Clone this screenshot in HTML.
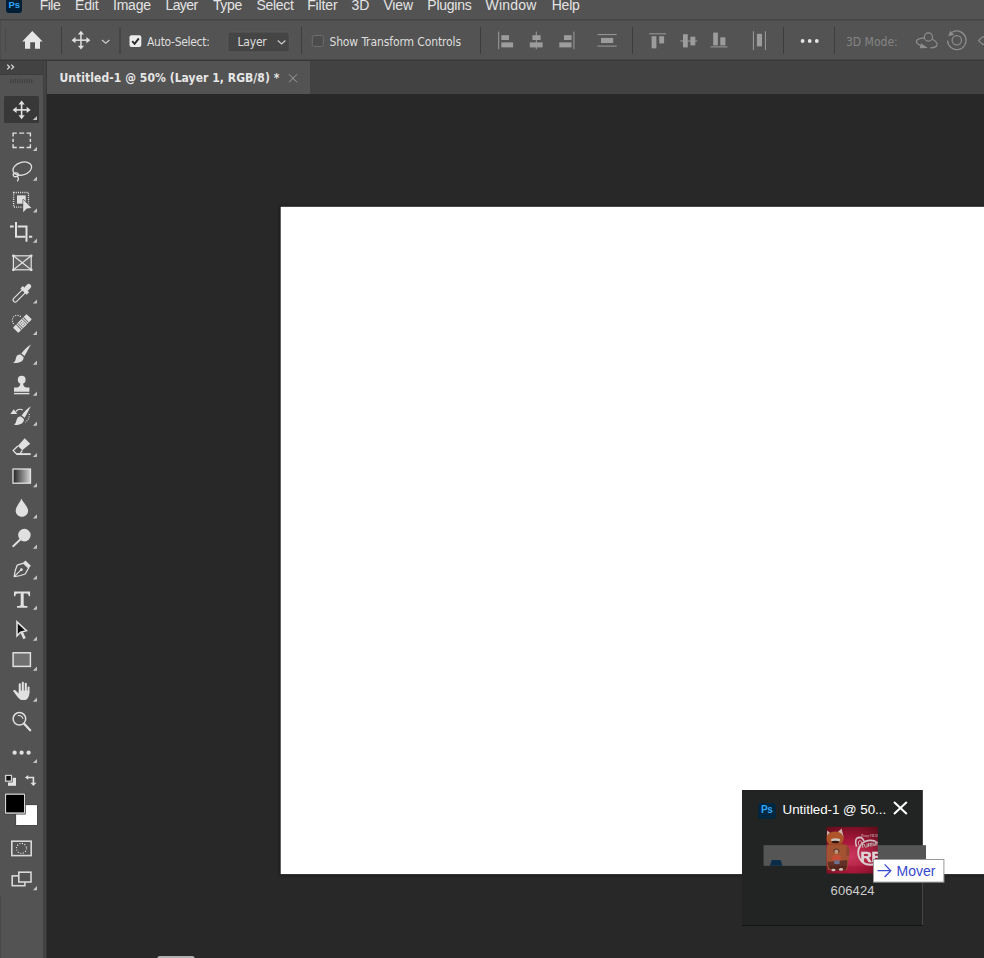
<!DOCTYPE html>
<html><head><meta charset="utf-8"><title>Photoshop</title>
<style>
html,body{margin:0;padding:0;background:#282828;overflow:hidden}
#app{position:relative;width:984px;height:958px;overflow:hidden;background:#282828;font-family:"DejaVu Sans Condensed","Liberation Sans",sans-serif;font-size:12px;color:#dcdcdc}
.abs{position:absolute}
.t{position:absolute;white-space:nowrap;line-height:1}
#menubar{left:0;top:0;width:984px;height:19px;background:#535353}
#optbar{left:0;top:21px;width:984px;height:38px;background:#535353}
.hline{background:#383838}
.menu{font-family:"Liberation Sans",sans-serif;font-size:14px;color:#e4e4e4;top:-2px}
.sep{position:absolute;top:27px;width:1px;height:27px;background:#3d3d3d}
.opt{top:36px;font-size:12px;color:#dedede}
#tabbar{left:47px;top:61px;width:937px;height:33px;background:#424242}
#tab{left:47px;top:61px;width:263px;height:33px;background:#535353}
#tools{left:0;top:61px;width:43px;height:897px;background:#535353}
#toolhead{left:0;top:61px;width:43px;height:13px;background:#424242;border-bottom:1px solid #3c3c3c}
#gutter{left:43px;top:61px;width:4px;height:897px;background:#424242}
#canvas{left:281px;top:207px;width:703px;height:667px;background:#fff;box-shadow:0 0 3px 1px rgba(0,0,0,.45)}
svg{position:absolute;left:0;top:0;overflow:visible}
</style></head><body>
<div id="app">
<!-- workspace + canvas -->
<svg width="984" height="958" viewBox="0 0 984 958"><defs><filter id="cs" x="-5%" y="-5%" width="110%" height="110%"><feGaussianBlur stdDeviation="1.6"/></filter></defs><rect x="279.5" y="205.8" width="710" height="669.6" fill="#000" opacity="0.35" filter="url(#cs)"/><rect x="280.7" y="206.8" width="710" height="667.3" fill="#fff"/></svg>

<!-- menubar -->
<div id="menubar" class="abs"></div>
<div class="abs" style="left:0;top:19px;width:984px;height:1px;background:#444"></div><div class="abs" style="left:0;top:20px;width:984px;height:1px;background:#4b4b4b"></div>
<div id="optbar" class="abs"></div>
<div class="abs" style="left:0;top:59px;width:984px;height:1px;background:#474747"></div><div class="abs" style="left:0;top:60px;width:984px;height:1px;background:#383838"></div>

<!-- tabs -->
<div id="tabbar" class="abs"></div>
<div id="tab" class="abs"></div>

<!-- tools -->
<div id="tools" class="abs"></div>
<div id="gutter" class="abs"></div><div class="abs" style="left:46px;top:94px;width:1px;height:864px;background:#343434"></div><div class="abs" style="left:43px;top:61px;width:1px;height:33px;background:#3e3e3e"></div><div class="abs" style="left:44px;top:61px;width:1px;height:33px;background:#474747"></div><div class="abs" style="left:46px;top:61px;width:1px;height:33px;background:#393939"></div>
<div id="toolhead" class="abs"></div>

<!--MENU-->
<div class="abs" style="left:5.8px;top:-4px;width:16.6px;height:16.6px;border-radius:3px;background:#001e36"></div>
<div class="t" style="left:8.5px;top:0px;font-family:'Liberation Sans',sans-serif;font-weight:bold;font-size:9.5px;color:#31a8ff;letter-spacing:-0.2px">Ps</div>
<div class="t menu" style="left:39.8px;letter-spacing:-0.56px">File</div>
<div class="t menu" style="left:75.1px;letter-spacing:-0.18px">Edit</div>
<div class="t menu" style="left:113.0px;letter-spacing:-0.22px">Image</div>
<div class="t menu" style="left:165.5px;letter-spacing:-0.60px">Layer</div>
<div class="t menu" style="left:212.9px;letter-spacing:-0.35px">Type</div>
<div class="t menu" style="left:256.5px;letter-spacing:-0.32px">Select</div>
<div class="t menu" style="left:307.2px;letter-spacing:-0.15px">Filter</div>
<div class="t menu" style="left:351.4px;letter-spacing:0.05px">3D</div>
<div class="t menu" style="left:383.4px;letter-spacing:-0.12px">View</div>
<div class="t menu" style="left:427.3px;letter-spacing:-0.24px">Plugins</div>
<div class="t menu" style="left:485.5px;letter-spacing:0.20px">Window</div>
<div class="t menu" style="left:551.7px;letter-spacing:-0.20px">Help</div>

<!--OPTIONS-->
<svg width="984" height="62" viewBox="0 0 984 62">
<!-- grip -->
<line x1="5.5" y1="29" x2="5.5" y2="51" stroke="#444" stroke-width="1.4" stroke-dasharray="1.3 1.3"/>
<rect x="0" y="21" width="1" height="38" fill="#4b4b4b"/>
<!-- home -->
<path d="M32.3 31 L42.6 41.6 L40 41.6 L40 48.8 L35 48.8 L35 42.2 L30.2 42.2 L30.2 48.8 L25 48.8 L25 41.6 L22.2 41.6 Z" fill="#e6e6e6"/>
<!-- move icon -->
<g fill="#e0e0e0" stroke="none">
<rect x="80.2" y="33" width="1.5" height="14.4"/>
<rect x="74" y="39.4" width="14" height="1.5"/>
<path d="M80.95 30.7 L84 34.6 L77.9 34.6 Z"/>
<path d="M80.95 49.6 L84 45.7 L77.9 45.7 Z"/>
<path d="M71.6 40.15 L75.5 37.1 L75.5 43.2 Z"/>
<path d="M90.3 40.15 L86.4 37.1 L86.4 43.2 Z"/>
</g>
<path d="M102 40 L105.7 43.2 L109.4 40" fill="none" stroke="#cfcfcf" stroke-width="1.1"/>
<!-- checkbox checked -->
<rect x="129.5" y="35.2" width="11.8" height="11.8" rx="2" fill="#ececec"/>
<path d="M132.2 41.2 L134.6 43.8 L138.8 38.3" fill="none" stroke="#2a2a2a" stroke-width="1.9"/>
<!-- dropdown -->
<rect x="227.8" y="32" width="61.5" height="20" rx="2.5" fill="#454545" stroke="#5a5a5a" stroke-width="1"/>
<path d="M277.8 40.5 L281.6 44 L285.4 40.5" fill="none" stroke="#cfcfcf" stroke-width="1.1"/>
<!-- unchecked checkbox -->
<rect x="312.3" y="35.5" width="11" height="11" rx="2" fill="#4c4c4c" stroke="#6d6d6d" stroke-width="1"/>
<!-- align icons -->
<g fill="#9c9c9c">
<rect x="498.2" y="31.6" width="1" height="17.6"/><rect x="501.3" y="35.2" width="7.7" height="4.8"/><rect x="501.3" y="42.4" width="11.8" height="5"/>
<rect x="535.8" y="31.6" width="1" height="17.6"/><rect x="532.4" y="35.2" width="8.2" height="4.8"/><rect x="529.8" y="42.4" width="12.8" height="5"/>
<rect x="573.4" y="31.6" width="1" height="17.6"/><rect x="564" y="35.2" width="7.6" height="4.8"/><rect x="559.3" y="42.4" width="12.3" height="5"/>
<rect x="597.5" y="34.1" width="19.1" height="1"/><rect x="597.5" y="45.6" width="19.1" height="1"/><rect x="601" y="37.9" width="12.2" height="5.1"/>
<rect x="649.2" y="33.3" width="16.8" height="1"/><rect x="651.6" y="36.2" width="4.8" height="12.2"/><rect x="659.2" y="36.2" width="4.9" height="7.2"/>
<rect x="680.2" y="40.5" width="17.1" height="1"/><rect x="683" y="34.2" width="4.8" height="13.2"/><rect x="690.4" y="36.7" width="4.9" height="8.7"/>
<rect x="710.5" y="46.4" width="16.9" height="1"/><rect x="713.2" y="32.6" width="4.7" height="12.8"/><rect x="720.3" y="37.3" width="5.1" height="8.1"/>
<rect x="752.9" y="31.2" width="1" height="18.8"/><rect x="764.9" y="31.2" width="1" height="18.8"/><rect x="756.9" y="33.8" width="5.1" height="12.6"/>
</g>
<g fill="none" stroke="#8e8e8e" stroke-width="1.2">
<circle cx="928.4" cy="37" r="4.1"/>
<path d="M924.6 38.2 C919 38 915.5 40 916.6 42.3 C917.4 44 920 45.6 923.5 46.6"/>
<path d="M932.3 39.3 C935.5 41 937.6 43 937 45 C936.3 47 933.5 47.8 930.3 47.8"/>
<path d="M947.5 40.6 A9.3 9.3 0 1 0 952.4 32.1"/>
<circle cx="956.8" cy="40.3" r="4.7"/>
<path d="M984 36.8 L982.6 36.8 L978.6 40.6 L982.6 44.4 L984 44.4"/>
</g>
<g fill="#8e8e8e"><path d="M921 43.3 L927.8 48 L919.8 48.3 Z"/><path d="M948.2 36.2 L950.3 30.8 L954.2 34.7 Z"/></g>
<g fill="#e4e4e4"><circle cx="802.6" cy="41" r="1.9"/><circle cx="809.7" cy="41" r="1.9"/><circle cx="816.8" cy="41" r="1.9"/></g>
</svg>
<div class="sep" style="left:61px"></div>
<div class="sep" style="left:119px;width:2px;background:#454545"></div>
<div class="sep" style="left:301px"></div>
<div class="sep" style="left:480px"></div>
<div class="sep" style="left:632px"></div>
<div class="sep" style="left:783px"></div>
<div class="sep" style="left:834px"></div>
<div class="t opt" style="left:147px;letter-spacing:-0.3px">Auto-Select:</div>
<div class="t opt" style="left:237.6px;letter-spacing:-0.24px">Layer</div>
<div class="t opt" style="left:329.4px;letter-spacing:-0.11px">Show Transform Controls</div>
<div class="t opt" style="left:846px;color:#858585">3D Mode:</div>

<!--TABTEXT-->
<div class="t" style="left:59.5px;top:72px;font-weight:bold;font-size:12px;color:#e6e6e6;letter-spacing:0.06px">Untitled-1 @ 50% (Layer 1, RGB/8) *</div>
<svg width="984" height="100" viewBox="0 0 984 100"><path d="M289 74.3 L297 82.3 M297 74.3 L289 82.3" stroke="#a0a0a0" stroke-width="1" fill="none"/></svg>

<!--TOOLICONS-->
<svg width="48" height="958" viewBox="0 0 48 958">
<!-- header chevrons + grip -->
<path d="M7.2 64.6 L9.6 67 L7.2 69.4 M11.2 64.6 L13.6 67 L11.2 69.4" fill="none" stroke="#d8d8d8" stroke-width="1.3"/>
<g fill="#404040"><rect x="10.00" y="78.8" width="1.1" height="4.4"/><rect x="12.36" y="78.8" width="1.1" height="4.4"/><rect x="14.72" y="78.8" width="1.1" height="4.4"/><rect x="17.08" y="78.8" width="1.1" height="4.4"/><rect x="19.44" y="78.8" width="1.1" height="4.4"/><rect x="21.80" y="78.8" width="1.1" height="4.4"/><rect x="24.16" y="78.8" width="1.1" height="4.4"/><rect x="26.52" y="78.8" width="1.1" height="4.4"/><rect x="28.88" y="78.8" width="1.1" height="4.4"/><rect x="31.24" y="78.8" width="1.1" height="4.4"/></g>
<!-- selected tool bg -->
<rect x="4" y="96" width="35" height="27" rx="1.5" fill="#383838"/>
<g fill="#c4c4c4"><path d="M37 120.1 L37 115.9 L32.8 120.1 Z"/><path d="M37 150.9 L37 146.7 L32.8 150.9 Z"/><path d="M37 180.8 L37 176.6 L32.8 180.8 Z"/><path d="M37 212.4 L37 208.2 L32.8 212.4 Z"/><path d="M37 242.7 L37 238.5 L32.8 242.7 Z"/><path d="M37 303.6 L37 299.4 L32.8 303.6 Z"/><path d="M37 334.9 L37 330.7 L32.8 334.9 Z"/><path d="M37 364.8 L37 360.6 L32.8 364.8 Z"/><path d="M37 395.7 L37 391.5 L32.8 395.7 Z"/><path d="M37 425.8 L37 421.6 L32.8 425.8 Z"/><path d="M37 457.1 L37 452.9 L32.8 457.1 Z"/><path d="M37 487.2 L37 483.0 L32.8 487.2 Z"/><path d="M37 518.4 L37 514.2 L32.8 518.4 Z"/><path d="M37 548.7 L37 544.5 L32.8 548.7 Z"/><path d="M37 579.5 L37 575.3 L32.8 579.5 Z"/><path d="M37 609.8 L37 605.6 L32.8 609.8 Z"/><path d="M37 640.7 L37 636.5 L32.8 640.7 Z"/><path d="M37 670.8 L37 666.6 L32.8 670.8 Z"/><path d="M37 701.7 L37 697.5 L32.8 701.7 Z"/><path d="M37 763.1 L37 758.9 L32.8 763.1 Z"/><path d="M37 890.2 L37 886.0 L32.8 890.2 Z"/></g>
<!-- move -->
<g fill="#e0e0e0">
<rect x="20.8" y="103" width="1.6" height="14"/><rect x="15" y="109.1" width="13.2" height="1.6"/>
<path d="M21.6 100.6 L24.7 104.6 L18.5 104.6 Z"/><path d="M21.6 119.2 L24.7 115.2 L18.5 115.2 Z"/>
<path d="M12.6 109.9 L16.6 106.8 L16.6 113 Z"/><path d="M30.6 109.9 L26.6 106.8 L26.6 113 Z"/>
</g>
<!-- marquee -->
<g fill="none" stroke="#e0e0e0" stroke-width="1.4">
<path d="M13.1 136.6 L13.1 133.1 L16.8 133.1 M19.2 133.1 L24.2 133.1 M26.6 133.1 L30.4 133.1 L30.4 136.6 M30.4 138.8 L30.4 142 M30.4 144.2 L30.4 147.5 L26.6 147.5 M24.2 147.5 L19.2 147.5 M16.8 147.5 L13.1 147.5 L13.1 144.2 M13.1 142 L13.1 138.8"/>
</g>
<!-- lasso -->
<g fill="none" stroke="#e0e0e0" stroke-width="1.3">
<ellipse cx="22.3" cy="168.6" rx="9.6" ry="6.3" transform="rotate(-17 22.3 168.6)"/>
<ellipse cx="15.8" cy="174.8" rx="2.6" ry="1.9" transform="rotate(-10 15.8 174.8)"/>
<path d="M17 176.3 C18.8 177.6 18.8 179.6 17.2 181.3"/>
</g>
<!-- object selection -->
<rect x="13.6" y="192.5" width="14.9" height="14.6" fill="none" stroke="#e0e0e0" stroke-width="1.3" stroke-dasharray="1.1 1.05"/>
<rect x="17" y="195.4" width="8.7" height="8.3" fill="#e0e0e0"/>
<path d="M23.2 199.6 L23.2 212.2 L26.8 208.6 L31.4 208 Z" fill="#e0e0e0" stroke="#535353" stroke-width="1.3" stroke-linejoin="round" paint-order="stroke"/>
<!-- crop -->
<g fill="none" stroke="#e0e0e0" stroke-width="2">
<path d="M16 222.1 L16 236.8 L25.5 236.8"/><path d="M17.7 226.4 L26.5 226.4 L26.5 241.8"/>
<path d="M10 226.4 L13.7 226.4 M29 236.8 L32.2 236.8"/>
</g>
<!-- frame -->
<rect x="13.4" y="255.8" width="17.8" height="14" fill="#626262" stroke="#e0e0e0" stroke-width="1.2"/>
<path d="M13.4 255.8 L31.2 269.8 M31.2 255.8 L13.4 269.8" stroke="#e0e0e0" stroke-width="1.2"/>
<g fill="#e0e0e0"><circle cx="13.4" cy="255.8" r="1.4"/><circle cx="31.2" cy="255.8" r="1.4"/><circle cx="13.4" cy="269.8" r="1.4"/><circle cx="31.2" cy="269.8" r="1.4"/></g>
<!-- eyedropper -->
<g transform="rotate(45 22 293)">
<rect x="20" y="289.6" width="4.2" height="15.2" rx="2.1" fill="none" stroke="#e0e0e0" stroke-width="1.2"/>
<rect x="17.6" y="287.5" width="9" height="3.5" fill="#e0e0e0"/>
<rect x="19.7" y="281.2" width="4.8" height="7.5" rx="2.2" fill="#e0e0e0"/>
</g>
<!-- spot healing -->
<g transform="translate(22.4 323.5) rotate(-45)">
<rect x="-9.6" y="-3.8" width="19.2" height="7.6" rx="0.9" fill="#e0e0e0"/>
<g fill="#535353"><rect x="-5.5" y="-3.6" width="0.8" height="7.2"/><rect x="-3.5" y="-3.6" width="0.7" height="7.2"/><rect x="2.8" y="-3.6" width="0.7" height="7.2"/><rect x="4.7" y="-3.6" width="0.8" height="7.2"/>
<circle cx="-1" cy="-2" r="0.55"/><circle cx="1" cy="-2" r="0.55"/><circle cx="-1" cy="0" r="0.55"/><circle cx="1" cy="0" r="0.55"/><circle cx="-1" cy="2" r="0.55"/><circle cx="1" cy="2" r="0.55"/></g>
</g>
<path d="M13.6 324 C11.4 320.6 12.2 317 15.2 315.7 C17.2 314.9 19.6 315.6 20.9 316.9" fill="none" stroke="#e0e0e0" stroke-width="1.2" stroke-dasharray="1.1 1.3"/>
<!-- brush -->
<path d="M30.9 344.5 C28.9 348 26.6 352.4 24.5 356 L21.3 353.6 C23.9 350.2 27.5 346.6 30.9 344.5 Z" fill="#e0e0e0"/>
<path d="M20.5 354.6 L23.6 357 C24 361.2 19.6 363.5 13.2 362.9 C15.4 361.6 15.4 360 16 357.8 C16.7 355.2 18.5 354.2 20.5 354.6 Z" fill="#e0e0e0"/>
<!-- stamp -->
<circle cx="21.7" cy="379.7" r="3.9" fill="#e0e0e0"/>
<path d="M20.3 382.5 L23.1 382.5 C23.1 385 23.6 387 26 387.4 L29.4 387.4 L29.4 391.7 L14 391.7 L14 387.4 L17.4 387.4 C19.8 387 20.3 385 20.3 382.5 Z" fill="#e0e0e0"/>
<rect x="14" y="392.9" width="15.4" height="1.4" fill="#e0e0e0"/>
<!-- history brush -->
<path d="M30.9 406.3 C28.9 409.8 26.8 414.2 24.7 417.8 L21.6 415.4 C24.2 412 27.5 408.4 30.9 406.3 Z" fill="#e0e0e0"/>
<path d="M20.9 416.5 L23.9 418.9 C24.3 423 20 425.4 13.8 424.8 C16 423.5 16 422 16.6 419.8 C17.3 417.2 18.9 416.1 20.9 416.5 Z" fill="#e0e0e0"/>
<path d="M10.3 414 L13.8 409.3 L17.2 414 Z" fill="#e0e0e0"/>
<path d="M15.8 411.5 C17.8 409.2 20.5 408.8 22.8 410" fill="none" stroke="#e0e0e0" stroke-width="1.2"/>
<path d="M29.2 414 C29.7 417.5 28 420.6 25 422.2" fill="none" stroke="#e0e0e0" stroke-width="1.1" stroke-dasharray="1 1.3"/>
<!-- eraser -->
<path d="M24.7 438.3 L30.2 443.7 L22.3 450.3 L17.8 446 Z" fill="#e0e0e0"/>
<path d="M17.8 446 L13.2 450.6 L16.6 454 L19.8 454 L22.3 450.3" fill="none" stroke="#e0e0e0" stroke-width="1.3"/>
<path d="M16.4 454.1 L30.7 454.1" stroke="#e0e0e0" stroke-width="1.9"/>
<!-- gradient -->
<defs><linearGradient id="gr" x1="0" x2="1" y1="0" y2="0"><stop offset="0" stop-color="#222"/><stop offset="1" stop-color="#d4d4d4"/></linearGradient></defs>
<rect x="13" y="469" width="17.5" height="14.2" fill="url(#gr)" stroke="#e0e0e0" stroke-width="1.3"/>
<!-- blur -->
<path d="M21.4 498.4 C22.6 502 28.1 506.5 28.1 510.8 C28.1 514.4 25.2 516.8 21.9 516.8 C18.6 516.8 15.7 514.4 15.7 510.8 C15.7 506.5 20.4 502 21.4 498.4 Z" fill="#e0e0e0"/>
<!-- dodge -->
<circle cx="24.4" cy="535.1" r="6.3" fill="#e0e0e0"/>
<path d="M20.5 539.2 L13.2 546.2" stroke="#e0e0e0" stroke-width="1.9" stroke-linecap="round"/>
<!-- pen -->
<path d="M14.2 576.6 C14.6 572.6 15.6 568.4 17.2 565.2 L23.6 563.2 L28.6 568 L25.2 574 C22 575.4 18 576.4 14.2 576.6 Z" fill="none" stroke="#e0e0e0" stroke-width="1.3" stroke-linejoin="round"/>
<path d="M14.4 576.4 L20.8 570.2" stroke="#e0e0e0" stroke-width="1.1"/>
<circle cx="21.4" cy="569.7" r="1.4" fill="#e0e0e0"/>
<path d="M25.4 560.4 L30.9 565.8 L28.9 567.9 L23.4 562.5 Z" fill="#e0e0e0"/>
<!-- type -->
<path d="M14 591.4 L30.1 591.4 L30.1 596.2 L28.8 596.2 C28.6 594.6 28 593.6 26.4 593.6 L23.7 593.6 L23.7 604.4 C23.7 605.6 24.6 606 27.4 606 L27.4 607.7 L17 607.7 L17 606 C19.8 606 20.7 605.6 20.7 604.4 L20.7 593.6 L17.7 593.6 C16.1 593.6 15.5 594.6 15.3 596.2 L14 596.2 Z" fill="#e0e0e0"/>
<!-- path selection -->
<path d="M21 631 L24.6 638.6" stroke="#e0e0e0" stroke-width="2.6"/>
<path d="M17 621.8 L17 635.8 L20.6 632.2 L26.4 630.7 Z" fill="#0c0c0c" stroke="#e0e0e0" stroke-width="1.6" stroke-linejoin="miter"/>
<!-- rectangle -->
<rect x="13.1" y="652.8" width="17.3" height="13.6" fill="#707070" stroke="#e0e0e0" stroke-width="1.5"/>
<!-- hand -->
<g fill="none" stroke="#e0e0e0" stroke-linecap="round">
<path d="M19.8 684.4 L19.8 692" stroke-width="2.1"/><path d="M22.8 682.8 L22.8 692" stroke-width="2.1"/><path d="M25.8 683.7 L25.8 692" stroke-width="2.1"/><path d="M28.6 687.4 L28.4 693" stroke-width="1.9"/>
</g>
<path d="M18.7 690.5 L29.4 690.5 C29.6 694 29 697.4 27 699.2 C25.2 700.4 21.6 700.4 19.8 699.2 C17.4 697 15.4 694 13.2 691.2 C13.2 689.8 14.6 689.6 15.6 690.4 L18.7 693.6 Z" fill="#e0e0e0"/>
<!-- zoom -->
<circle cx="19.4" cy="718.8" r="6.3" fill="none" stroke="#e0e0e0" stroke-width="1.5"/>
<path d="M24.2 723.8 L30.2 730.2" stroke="#e0e0e0" stroke-width="2.3" stroke-linecap="round"/>
<path d="M17.8 715.6 C20 715.4 22.4 716.6 23 718.8" fill="none" stroke="#e0e0e0" stroke-width="1.1"/>
<!-- dots -->
<g fill="#e0e0e0"><circle cx="14.6" cy="752.7" r="2.15"/><circle cx="21.6" cy="752.7" r="2.15"/><circle cx="28.6" cy="752.7" r="2.15"/></g>
<!-- default colors -->
<rect x="8" y="777.8" width="8" height="8" fill="#e4e4e4"/>
<rect x="4.7" y="774.4" width="7.7" height="7.7" fill="#cfcfcf" stroke="#4a4a4a" stroke-width="0.6"/>
<rect x="6.3" y="776" width="4.5" height="4.5" fill="#141414"/>
<!-- swap -->
<path d="M25 777.4 L28.2 775 L28.2 779.8 Z" fill="#e0e0e0"/><path d="M30.4 782.7 L36.4 782.7 L33.4 785.9 Z" fill="#e0e0e0"/>
<path d="M28 777.5 L33.4 777.5 L33.4 783" fill="none" stroke="#e0e0e0" stroke-width="1.6"/>
<!-- bg / fg swatches -->
<rect x="15.6" y="804.6" width="21.9" height="20.9" fill="#3e3e3e"/>
<rect x="16.1" y="805.1" width="20.9" height="19.9" fill="#fff"/>
<rect x="4.2" y="792.9" width="21.6" height="21.6" rx="1" fill="#3c3c3c"/>
<rect x="4.9" y="793.6" width="20.2" height="20.2" rx="0.8" fill="#d6d6d6"/>
<rect x="6.1" y="794.8" width="17.9" height="17.6" fill="#000"/>
<!-- quick mask -->
<rect x="11.8" y="841.2" width="19.4" height="14.4" fill="none" stroke="#d8d8d8" stroke-width="1.6"/>
<circle cx="21.5" cy="848.4" r="5" fill="none" stroke="#e8e8e8" stroke-width="1.1" stroke-dasharray="1.1 1.5"/>
<!-- screen mode -->
<rect x="12.2" y="875.9" width="12.7" height="9.8" fill="none" stroke="#d8d8d8" stroke-width="1.6"/>
<rect x="18.8" y="872.2" width="12.2" height="9.8" fill="#535353" stroke="#d8d8d8" stroke-width="1.6"/>
</svg>

<!--POPUP-->
<div class="abs" style="left:742px;top:790px;width:180px;height:135px;background:#222423"></div><div class="abs" style="left:922px;top:790px;width:1px;height:135px;background:#464646"></div><div class="abs" style="left:742px;top:925px;width:181px;height:1px;background:#131313"></div>
<div class="abs" style="left:758px;top:802.5px;width:17.5px;height:16.5px;border-radius:3.5px;background:#002640"></div>
<div class="t" style="left:761px;top:805px;font-family:'Liberation Sans',sans-serif;font-weight:bold;font-size:10px;color:#34a6f8;letter-spacing:-0.3px">Ps</div>
<div class="t" style="left:782.6px;top:803.3px;font-family:'Liberation Sans',sans-serif;font-size:13.4px;color:#fff;letter-spacing:-0.05px">Untitled-1 @ 50...</div>
<svg width="984" height="958" viewBox="0 0 984 958" style="pointer-events:none">
<defs>
<radialGradient id="pbg" cx="0.48" cy="0.62" r="0.75"><stop offset="0" stop-color="#e83060"/><stop offset="0.45" stop-color="#c8143e"/><stop offset="1" stop-color="#74081a"/></radialGradient>
<filter id="bl" x="-20%" y="-20%" width="140%" height="140%"><feGaussianBlur stdDeviation="0.55"/></filter>
<filter id="bl2" x="-20%" y="-20%" width="140%" height="140%"><feGaussianBlur stdDeviation="0.4"/></filter>
<clipPath id="pc"><rect x="826.5" y="826.8" width="51.3" height="46.7"/></clipPath>
</defs>
<path d="M894 802 L906.8 814 M906.8 802 L894 814" stroke="#fff" stroke-width="2.1" fill="none"/>
<!-- ghost band -->
<rect x="763.6" y="845.2" width="162.4" height="20.6" fill="#555"/>
<path d="M770 865.8 L771.6 860.6 C771.8 860.2 772.2 860 772.6 860 L779.8 860 C780.2 860 780.6 860.2 780.8 860.6 L782.4 865.8 Z" fill="#0b2c48"/>
<!-- poster thumbnail -->
<g opacity="0.8">
<rect x="826.5" y="826.8" width="51.3" height="46.7" fill="url(#pbg)"/>
<g clip-path="url(#pc)">
<g filter="url(#bl)">
<path d="M826.8 837 L827.2 830.6 L832 834.6 Z" fill="#f6dcd0"/>
<path d="M836.8 833 L841.6 828.6 L843.6 837 Z" fill="#f6d8cc"/>
<ellipse cx="835" cy="838.6" rx="8.8" ry="7.2" fill="#d0602c"/>
<path d="M827 845 C825.6 852 826 862 828 870 L847 870 C849 861 849.4 853 848 846.4 C843 842 832 842 827 845 Z" fill="#b8522c"/>
<path d="M846.4 846.6 C849.6 847.6 850.6 852 848.6 856.4 L846 855 Z" fill="#9c4226"/>
<path d="M827.6 862 C828 867 830 870.6 834 870.6 L845 870.6 C847 868 847.8 864 847.2 860 Z" fill="#66281a"/>
<ellipse cx="835.6" cy="840" rx="4.6" ry="1.8" fill="#fbeee6"/>
<ellipse cx="835.4" cy="842" rx="3.8" ry="1.2" fill="#3e1610"/>
<ellipse cx="833.4" cy="870" rx="2.1" ry="1.3" fill="#f6e6de"/><ellipse cx="841" cy="869.4" rx="2.1" ry="1.3" fill="#f6e6de"/>
</g>
<g filter="url(#bl2)">
<path d="M833.4 851 C833.4 847.6 839.4 847.6 839.4 851.2 L838.8 853 L834 853 Z" fill="#4a2a1e"/>
<ellipse cx="836.4" cy="851.8" rx="2.1" ry="2.3" fill="#dca27c"/>
<path d="M832.6 856.4 C833.4 854.6 839.6 854.6 840.4 856.4 L841.2 859.4 L839.6 860.6 L833.4 860.6 L831.8 859.4 Z" fill="#e04c30"/>
<rect x="834.2" y="860.4" width="5.4" height="3.8" fill="#74749c"/>
<rect x="834.6" y="864" width="1.7" height="5" fill="#5a2418"/><rect x="837.6" y="864" width="1.7" height="5" fill="#5a2418"/>
</g>
<!-- logo -->
<g fill="none" stroke="#fbe4ea" filter="url(#bl2)">
<circle cx="870.4" cy="852.6" r="12.2" stroke-width="1.9"/>
<path d="M856.6 846.6 C854.6 841.4 855.6 837.6 859.4 837.4 C861.8 837.4 863.2 839 864 841.2" stroke-width="1.6"/>
<path d="M858.8 845 C858 842.6 858.6 840.4 860 840.6 C861 840.8 861.6 841.8 861.8 842.8" stroke-width="0.9"/>
</g>
<text x="861.4" y="848.2" font-family="Liberation Sans, sans-serif" font-weight="bold" font-size="5.4" fill="#fff0f2" stroke="#7a0a1e" stroke-width="0.5" paint-order="stroke" transform="rotate(-10 861.4 848.2)" textLength="23" lengthAdjust="spacingAndGlyphs">TURNING</text>
<text x="860.6" y="862" font-family="Liberation Sans, sans-serif" font-weight="bold" font-size="15.5" fill="#fff4f6" stroke="#fff4f6" stroke-width="0.5" letter-spacing="-0.4">RED</text>
<text x="861" y="836.8" font-family="Liberation Serif, serif" font-style="italic" font-size="3.9" fill="#f4dce2" textLength="17" lengthAdjust="spacingAndGlyphs">Disney·PIXAR</text>
</g>
</g>
<!-- tooltip -->
<rect x="873.5" y="859.5" width="70.4" height="22.6" fill="#fff" stroke="#9a9a9a" stroke-width="1"/>
<path d="M877.4 870.7 L890.6 870.7 M884.6 864.4 L890.8 870.7 L884.6 877" fill="none" stroke="#3c4fd2" stroke-width="1.3"/>
</svg>
<div class="t" style="left:896.6px;top:864.1px;font-family:'Liberation Sans',sans-serif;font-size:14px;color:#3548cc;letter-spacing:-0.05px">Mover</div>
<div class="t" style="left:830.6px;top:884.2px;font-family:'Liberation Sans',sans-serif;font-size:13px;color:#cdcdcd;letter-spacing:0.1px">606424</div>
<div class="abs" style="left:157px;top:955.5px;width:38.4px;height:6px;border-radius:3px;background:#b0b0b0"></div>
<div class="abs" style="left:0;top:896px;width:1px;height:62px;background:#4a4a4a"></div>

</div>
</body></html>
